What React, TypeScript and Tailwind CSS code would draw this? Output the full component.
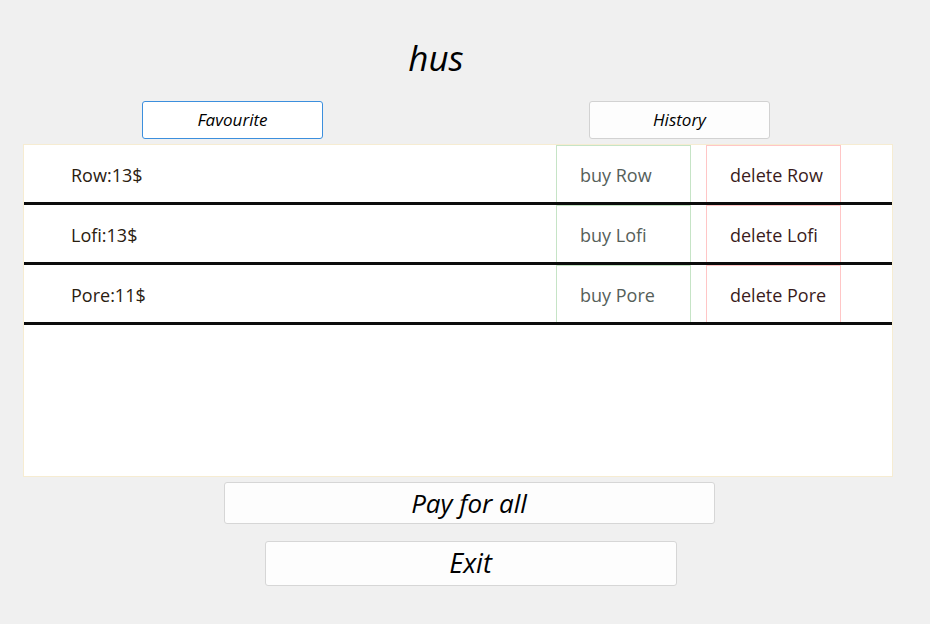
import React from "react";

const items = [
  { name: "Row", price: 13 },
  { name: "Lofi", price: 13 },
  { name: "Pore", price: 11 },
];

export default function App() {
  return (
    <div
      className="w-[930px] h-[624px] bg-[#f0f0f0] flex flex-col"
      style={{ fontFamily: '"Open Sans", "Noto Sans", sans-serif' }}
    >
      <div className="h-[42px]" />
      <div className="flex justify-center pr-[58px]">
        <span className="italic text-[35px] leading-[32px] text-black">hus</span>
      </div>
      <div className="flex mt-[27px] h-[38px]">
        <div className="w-[142px]" />
        <button className="w-[181px] h-[38px] bg-white border border-[#3c8fdd] rounded-[3px] italic text-[17px] text-black">
          Favourite
        </button>
        <div className="w-[266px]" />
        <button className="w-[181px] h-[38px] bg-[#fdfdfd] border border-[#d2d2d2] rounded-[3px] italic text-[17px] text-black">
          History
        </button>
      </div>
      <div className="ml-[23px] w-[870px] mt-[5px] h-[333px] bg-white border border-[#f6ecd2] flex flex-col">
        {items.map((it) => (
          <div key={it.name} className="flex flex-col">
            <div className="flex h-[57px] items-stretch">
              <div className="flex-1 flex items-center pt-[3px] pl-[47px] text-[18px] text-[#2a2010]">
                {it.name}:{it.price}$
              </div>
              <div className="w-[135px] border border-b-0 border-[#c6e4c6] flex items-center pt-[3px] pl-[23px] text-[18px] text-[#56605a]">
                buy {it.name}
              </div>
              <div className="w-[15px]" />
              <div className="w-[135px] border border-b-0 border-[#ffc6c6] flex items-center pt-[3px] pl-[23px] text-[18px] text-[#3a1c1c]">
                delete {it.name}
              </div>
              <div className="w-[51px]" />
            </div>
            <div className="h-[3px] bg-[#0c0c0c]" />
          </div>
        ))}
      </div>
      <div className="flex justify-center mt-[5px] pl-[8px]">
        <button className="w-[491px] h-[42px] bg-[#fdfdfd] border border-[#d6d6d6] rounded-[3px] italic text-[26px] text-black">
          Pay for all
        </button>
      </div>
      <div className="flex justify-center mt-[17px] pl-[11px]">
        <button className="w-[412px] h-[45px] bg-[#fdfdfd] border border-[#d6d6d6] rounded-[3px] italic text-[27px] text-black">
          Exit
        </button>
      </div>
    </div>
  );
}
